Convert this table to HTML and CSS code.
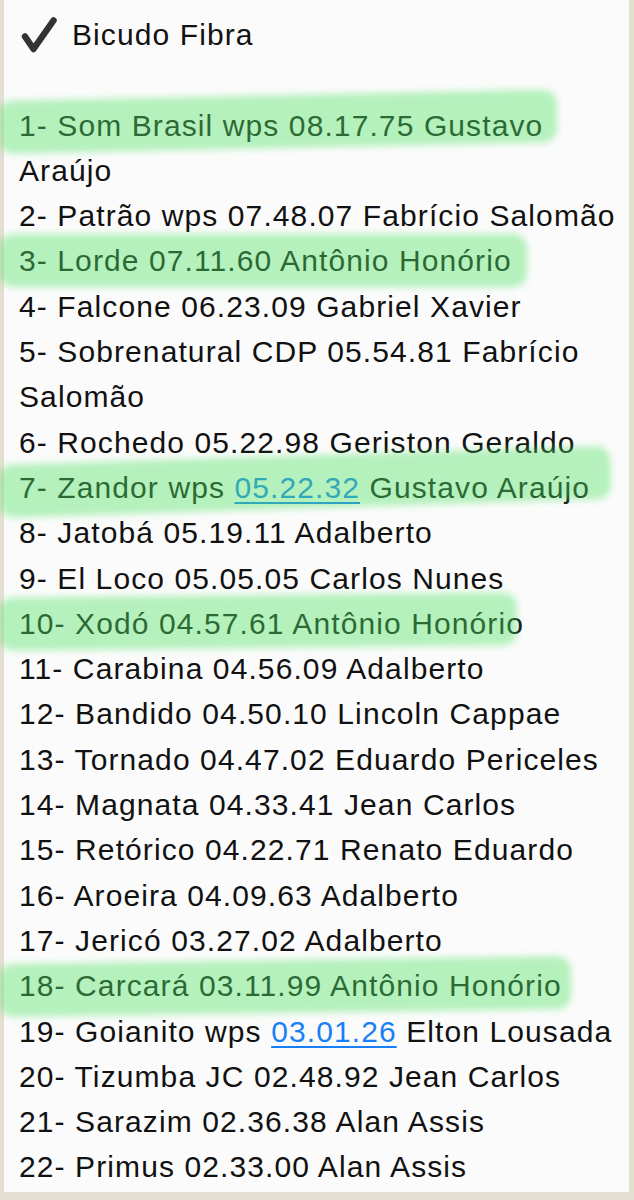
FILE: index.html
```html
<!DOCTYPE html>
<html lang="pt">
<head>
  <meta charset="UTF-8" />
  <title>Bicudo Fibra</title>
  <link rel="stylesheet" href="styles.css">
</head>
<body>

  <!-- MESSAGE BUBBLE -->
  <div class="bubble">
    <div class="title">
      <svg class="check" viewBox="0 0 38 38" width="38" height="38">
        <path d="M5 20.5 L13.5 33 L33.5 4.5" fill="none" stroke="#333" stroke-width="6.5" stroke-linecap="round" stroke-linejoin="round"/>
      </svg>
      <span>Bicudo Fibra</span>
    </div>

    <div class="list">
      <p class="row mark mark-1">1- Som Brasil wps 08.17.75 Gustavo Araújo</p>
      <p class="row">2- Patrão wps 07.48.07 Fabrício Salomão</p>
      <p class="row mark mark-3">3- Lorde 07.11.60 Antônio Honório</p>
      <p class="row">4- Falcone 06.23.09 Gabriel Xavier</p>
      <p class="row">5- Sobrenatural CDP 05.54.81 Fabrício Salomão</p>
      <p class="row">6- Rochedo 05.22.98 Geriston Geraldo</p>
      <p class="row mark mark-7">7- Zandor wps <a class="time" href="#">05.22.32</a> Gustavo Araújo</p>
      <p class="row">8- Jatobá 05.19.11 Adalberto</p>
      <p class="row">9- El Loco 05.05.05 Carlos Nunes</p>
      <p class="row mark mark-10">10- Xodó 04.57.61 Antônio Honório</p>
      <p class="row">11- Carabina 04.56.09 Adalberto</p>
      <p class="row">12- Bandido 04.50.10 Lincoln Cappae</p>
      <p class="row">13- Tornado 04.47.02 Eduardo Periceles</p>
      <p class="row">14- Magnata 04.33.41 Jean Carlos</p>
      <p class="row">15- Retórico 04.22.71 Renato Eduardo</p>
      <p class="row">16- Aroeira 04.09.63 Adalberto</p>
      <p class="row">17- Jericó 03.27.02 Adalberto</p>
      <p class="row mark mark-18">18- Carcará 03.11.99 Antônio Honório</p>
      <p class="row">19- Goianito wps <a class="time" href="#">03.01.26</a> Elton Lousada</p>
      <p class="row">20- Tizumba JC 02.48.92 Jean Carlos</p>
      <p class="row">21- Sarazim 02.36.38 Alan Assis</p>
      <p class="row">22- Primus 02.33.00 Alan Assis</p>
    </div>
  </div>

</body>
</html>
```

FILE: styles.css
```css
body {
  margin: 0;
  background-color: #e5ded3;
  font-family: "Liberation Sans", Arial, sans-serif;
  color: #111;
  overflow: hidden;
}

/* Bubble */
.bubble {
  margin: 0 5px 8px 4px;
  padding: 12px 10px 2px 15px;
  background-color: #fbfbfb;
  font-size: 30px;
  letter-spacing: 1.1px;
  line-height: 45.3px;
}

.title {
  display: flex;
  align-items: center;
  height: 45.3px;
}

.title .check {
  margin: 0 14px 0 1px;
  flex-shrink: 0;
}

.list {
  margin-top: 45.3px;
}

.row {
  margin: 0;
  position: relative;
}

.time {
  color: #1a7ff5;
  text-decoration: underline;
  text-underline-offset: 4px;
  text-decoration-thickness: 2px;
}

/* Highlighter strokes, drawn over the text */
.mark::after {
  content: "";
  position: absolute;
  left: -20px;
  top: -4px;
  height: 53px;
  background-color: rgba(80, 226, 100, 0.42);
  border-radius: 14px;
  filter: blur(3.5px);
  pointer-events: none;
}

.mark-1::after {
  width: 558px;
  transform: rotate(-1.2deg);
  transform-origin: left center;
  top: -2px;
}

.mark-3::after {
  width: 528px;
  top: -4px;
}

.mark-7::after {
  width: 612px;
  transform: rotate(-1.8deg);
  transform-origin: left center;
  top: 0;
}

.mark-10::after {
  width: 518px;
  transform: rotate(-0.6deg);
  top: -6px;
}

.mark-18::after {
  width: 572px;
  transform: rotate(-0.8deg);
  top: -3px;
}
```
